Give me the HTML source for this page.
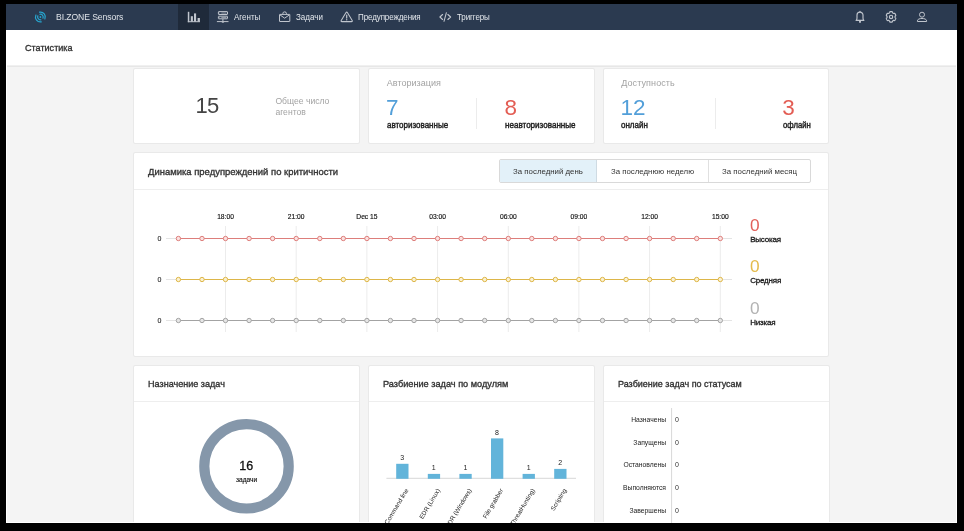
<!DOCTYPE html>
<html lang="ru">
<head>
<meta charset="utf-8">
<title>BI.ZONE Sensors</title>
<style>
*{box-sizing:border-box;margin:0;padding:0}
html,body{width:964px;height:531px;overflow:hidden;background:#000}
body{font-family:"Liberation Sans",sans-serif;color:#222;position:relative}
.app{will-change:transform;position:absolute;left:6px;top:4px;width:951px;height:519px;background:#f4f4f4;overflow:hidden;border:1px solid #fff;border-top:0}
.abs{position:absolute;white-space:nowrap}
.hdr{position:absolute;left:-1px;top:0;width:951px;height:26px;background:#2b3a50}
.hdr .act{position:absolute;left:172px;top:0;width:31px;height:26px;background:#1f2a3a}
.nav{position:absolute;top:0.4px;height:26px;line-height:26px;font-size:8.8px;color:#e3e7ec;white-space:nowrap;transform:scaleX(0.909);transform-origin:0 50%}
.sub{position:absolute;left:-1px;top:26px;width:951px;height:35px;background:#fff;box-shadow:0 1px 0 #f0f0f0,0 2px 0 #e7e7e7}
.sub span{position:absolute;left:19px;top:0;line-height:36px;font-size:9.05px;font-weight:normal;-webkit-text-stroke:0.32px #333;color:#333;transform-origin:0 50%}
.card{position:absolute;background:#fff;border:1px solid #fff;box-shadow:0 0 0 1px #e9e9e9;border-radius:1px}
.ct{position:absolute;left:12.6px;top:0;height:36px;line-height:36px;font-size:9.7px;font-weight:normal;-webkit-text-stroke:0.35px #333;color:#333;white-space:nowrap;transform-origin:0 50%}
.cl{position:absolute;left:-1px;right:-1px;top:35px;height:1px;background:#eeeeee}
.g{color:#a3a3a3}
.big{font-size:22.5px;line-height:22px}
.lab{font-size:8.4px;font-weight:normal;-webkit-text-stroke:0.4px #1c1c1c;color:#1c1c1c;transform-origin:0 50%}
svg{position:absolute;left:0;top:0;overflow:visible}
svg text{font-family:"Liberation Sans",sans-serif}
</style>
</head>
<body>
<div class="app">
  <div class="hdr">
    <div class="act"></div>
    <div class="nav" style="left:49.9px;font-size:9.4px;letter-spacing:-0.1px;transform:scaleX(0.921);color:#dfe3e8">BI.ZONE Sensors</div>
    <div class="nav" style="left:227.8px">Агенты</div>
    <div class="nav" style="left:290px">Задачи</div>
    <div class="nav" style="left:351.7px;letter-spacing:-0.11px">Предупреждения</div>
    <div class="nav" style="left:451px;letter-spacing:-0.13px">Триггеры</div>
  </div>
  <div class="sub"><span>Статистика</span></div>

  <!-- row 1 -->
  <div class="card" style="left:127px;top:65px;width:224.5px;height:73.6px">
    <div class="abs" style="left:60.4px;top:24px;font-size:22px;letter-spacing:-0.7px;line-height:24px;color:#444">15</div>
    <div class="abs g" style="left:140.4px;top:26px;font-size:8.6px;line-height:11px;white-space:normal;width:70px">Общее число агентов</div>
  </div>
  <div class="card" style="left:362px;top:65px;width:224.5px;height:73.6px">
    <div class="abs g" style="left:16.8px;top:6.8px;font-size:9px;line-height:12px;letter-spacing:0.03px">Авторизация</div>
    <div class="abs big" style="left:16px;top:27px;color:#529fd9">7</div>
    <div class="abs lab" style="left:16.8px;top:49.6px;transform:scaleX(0.955)">авторизованные</div>
    <div class="abs" style="left:106px;top:28px;width:1px;height:31px;background:#ececec"></div>
    <div class="abs big" style="left:134.6px;top:27px;color:#e35d54">8</div>
    <div class="abs lab" style="left:135.4px;top:49.6px;transform:scaleX(0.963)">неавторизованные</div>
  </div>
  <div class="card" style="left:597px;top:65px;width:224.4px;height:73.6px">
    <div class="abs g" style="left:16.2px;top:6.8px;font-size:9px;line-height:12px;letter-spacing:0.1px">Доступность</div>
    <div class="abs big" style="left:15.4px;top:27px;color:#529fd9">12</div>
    <div class="abs lab" style="left:16.2px;top:49.6px;transform:scaleX(0.954)">онлайн</div>
    <div class="abs" style="left:110px;top:28px;width:1px;height:31px;background:#ececec"></div>
    <div class="abs big" style="left:177.2px;top:27px;color:#e35d54">3</div>
    <div class="abs lab" style="left:178px;top:49.6px;transform:scaleX(0.92)">офлайн</div>
  </div>

  <!-- chart card -->
  <div class="card" style="left:127px;top:149px;width:694.4px;height:202.8px">
    <div class="ct" style="transform:scaleX(0.977)">Динамика предупреждений по критичности</div>
    <div class="cl"></div>
    <div id="bg" style="position:absolute;left:364px;top:5px;height:24px;display:flex;font-size:7.85px;line-height:23.4px;color:#333;border:1px solid #d9d9d9;border-radius:2px;overflow:hidden">
      <div style="width:97px;text-align:center;background:#e3f1f9;border-right:1px solid #cfdbe3">За последний день</div>
      <div style="width:112px;text-align:center;border-right:1px solid #e0e0e0">За последнюю неделю</div>
      <div style="width:101px;text-align:center">За последний месяц</div>
    </div>
  </div>

  <!-- bottom cards -->
  <div class="card" style="left:127px;top:362px;width:224.5px;height:170px">
    <div class="ct" style="transform:scaleX(0.9355);line-height:34px">Назначение задач</div><div class="cl" style="top:34px"></div>
  </div>
  <div class="card" style="left:362px;top:362px;width:224.5px;height:170px">
    <div class="ct" style="transform:scaleX(0.947);line-height:34px">Разбиение задач по модулям</div><div class="cl" style="top:34px"></div>
  </div>
  <div class="card" style="left:597px;top:362px;width:224.5px;height:170px">
    <div class="ct" style="transform:scaleX(0.929);line-height:34px">Разбиение задач по статусам</div><div class="cl" style="top:34px"></div>
  </div>
</div>
<div style="position:absolute;left:6px;top:4px;width:1px;height:26px;background:#2b3a50"></div><div style="position:absolute;left:956px;top:4px;width:1px;height:26px;background:#2b3a50"></div>
<!--SVG-->
<svg width="964" height="531" viewBox="0 0 964 531" style="clip-path:inset(4px 8px 8px 7px)">
<g fill="none" stroke="#27a5cf" stroke-width="1.2" stroke-linecap="round" transform="translate(40.4 17) rotate(52)"><circle r="0.95" fill="#27a5cf" stroke="none"/><path d="M-2.47 -1.31A2.8 2.8 0 0 1 2.47 -1.31"/><path d="M-2.47 1.31A2.8 2.8 0 0 0 2.47 1.31"/><path d="M-4.33 -2.30A4.9 4.9 0 0 1 4.33 -2.30"/><path d="M-4.33 2.30A4.9 4.9 0 0 0 4.33 2.30"/></g>
<g fill="#c0c5cd"><rect x="187.8" y="11.8" width="1.5" height="10.4"/><rect x="187.8" y="21.2" width="12.2" height="1"/><rect x="190.8" y="16.2" width="2.1" height="5.5"/><rect x="194" y="13.4" width="2.1" height="8.3"/><rect x="197.6" y="18" width="2.3" height="3.7"/></g>
<g fill="none" stroke="#c0c5cd" stroke-width="1"><rect x="218.4" y="11.6" width="9.1" height="2.9" rx="0.4"/><rect x="218.4" y="16.2" width="9.1" height="2.6" rx="0.4"/><path d="M216.9 21.6H228.5M222.9 19V21.5"/><path d="M221.3 13.05H226.5M221.3 17.5H226.5" stroke-width="0.9" opacity="0.75"/><path d="M219.6 13.05h.5M219.6 17.5h.5" stroke-width="0.9"/></g><ellipse cx="222.9" cy="22.1" rx="1.3" ry="0.7" fill="#c0c5cd"/>
<g fill="none" stroke="#c0c5cd" stroke-width="1" stroke-linejoin="round"><rect x="279.5" y="14.4" width="10.3" height="7.1" rx="0.2"/><path d="M282.8 14.4V13.7A1.85 1.85 0 0 1 286.5 13.7V14.4"/><path d="M280 14.9L284.65 18.2L289.3 14.9"/></g>
<g fill="none" stroke="#c0c5cd" stroke-width="1.05" stroke-linejoin="round" stroke-linecap="round"><path d="M345.9 12.7Q346.7 11.5 347.5 12.7L352.2 20.5Q352.8 21.6 351.5 21.6H341.9Q340.6 21.6 341.2 20.5Z"/><path d="M346.7 15.1V18.1" stroke-width="1.2"/></g><circle cx="346.7" cy="19.7" r="0.7" fill="#c0c5cd"/>
<g fill="none" stroke="#c0c5cd" stroke-width="1.15" stroke-linecap="round" stroke-linejoin="round"><path d="M442.6 14.5L439.9 17L442.6 19.5"/><path d="M447.9 14.5L450.6 17L447.9 19.5"/><path d="M446.4 12.7L444 21.3" stroke-width="1.05"/></g>
<g fill="none" stroke="#c0c5cd" stroke-width="1.15" stroke-linecap="round" stroke-linejoin="round"><path d="M856.1 20.4C856.8 19.8 857 19.1 857 18V15.1A3 3 0 0 1 863 15.1V18C863 19.1 863.2 19.8 863.9 20.4Z"/><path d="M860 11.9V11.3"/><path d="M860 21V22.7" stroke-width="1.9" stroke-linecap="butt"/></g>
<g fill="none" stroke="#c0c5cd" stroke-width="1.2" stroke-linejoin="round"><path d="M891.05 11.60L891.37 11.61L891.70 11.64L892.01 11.71L892.30 11.88L892.45 12.48L892.61 12.86L892.84 13.02L893.07 13.16L893.29 13.30L893.53 13.43L893.92 13.39L894.48 13.23L894.76 13.41L894.97 13.67L895.16 13.95L895.33 14.25L895.49 14.55L895.62 14.87L895.73 15.20L895.73 15.56L895.32 15.99L895.09 16.33L895.08 16.62L895.08 16.90L895.08 17.18L895.09 17.47L895.32 17.81L895.73 18.24L895.73 18.60L895.62 18.93L895.49 19.25L895.33 19.55L895.16 19.85L894.97 20.13L894.76 20.39L894.48 20.57L893.92 20.41L893.53 20.37L893.29 20.50L893.07 20.64L892.84 20.78L892.61 20.94L892.45 21.32L892.30 21.92L892.01 22.09L891.70 22.16L891.37 22.19L891.05 22.20L890.73 22.19L890.40 22.16L890.09 22.09L889.80 21.92L889.65 21.32L889.49 20.94L889.26 20.78L889.03 20.64L888.81 20.50L888.57 20.37L888.18 20.41L887.62 20.57L887.34 20.39L887.13 20.13L886.94 19.85L886.77 19.55L886.61 19.25L886.48 18.93L886.37 18.60L886.37 18.24L886.78 17.81L887.01 17.47L887.02 17.18L887.02 16.90L887.02 16.62L887.01 16.33L886.78 15.99L886.37 15.56L886.37 15.20L886.48 14.87L886.61 14.55L886.77 14.25L886.94 13.95L887.13 13.67L887.34 13.41L887.62 13.23L888.18 13.39L888.57 13.43L888.81 13.30L889.03 13.16L889.26 13.02L889.49 12.86L889.65 12.48L889.80 11.88L890.09 11.71L890.40 11.64L890.73 11.61L891.05 11.60Z"/><circle cx="891.05" cy="16.9" r="1.65"/></g>
<g fill="none" stroke="#c0c5cd" stroke-width="1" stroke-linejoin="round"><circle cx="922" cy="14.7" r="2.5"/><path d="M917.4 21.5V20.8C917.4 17.7 926.6 17.7 926.6 20.8V21.5Z"/></g>
<g shape-rendering="auto">
<path d="M225.5 226V332" stroke="#ececec" stroke-width="1"/>
<path d="M296.2 226V332" stroke="#ececec" stroke-width="1"/>
<path d="M366.9 226V332" stroke="#ececec" stroke-width="1"/>
<path d="M437.6 226V332" stroke="#ececec" stroke-width="1"/>
<path d="M508.3 226V332" stroke="#ececec" stroke-width="1"/>
<path d="M578.9 226V332" stroke="#ececec" stroke-width="1"/>
<path d="M649.6 226V332" stroke="#ececec" stroke-width="1"/>
<path d="M720.3 226V332" stroke="#ececec" stroke-width="1"/>
<g font-size="6.7" fill="#111" stroke="#111" stroke-width="0.15" text-anchor="middle">
<text x="225.5" y="219">18:00</text>
<text x="296.2" y="219">21:00</text>
<text x="366.9" y="219">Dec 15</text>
<text x="437.6" y="219">03:00</text>
<text x="508.3" y="219">06:00</text>
<text x="578.9" y="219">09:00</text>
<text x="649.6" y="219">12:00</text>
<text x="720.3" y="219">15:00</text>
</g>
<path d="M166 238.5H732" stroke="#e4e4e4" stroke-width="1"/>
<text x="161.3" y="241.0" font-size="7" fill="#222" stroke="#222" stroke-width="0.1" text-anchor="end">0</text>
<path d="M178.4 238.5H720.3" stroke="#dd7e7b" stroke-width="1.05"/>
<g fill="#fbe1e0" stroke="#dd7e7b" stroke-width="1">
<circle cx="178.4" cy="238.5" r="2.2"/>
<circle cx="202.0" cy="238.5" r="2.2"/>
<circle cx="225.5" cy="238.5" r="2.2"/>
<circle cx="249.1" cy="238.5" r="2.2"/>
<circle cx="272.6" cy="238.5" r="2.2"/>
<circle cx="296.2" cy="238.5" r="2.2"/>
<circle cx="319.8" cy="238.5" r="2.2"/>
<circle cx="343.3" cy="238.5" r="2.2"/>
<circle cx="366.9" cy="238.5" r="2.2"/>
<circle cx="390.4" cy="238.5" r="2.2"/>
<circle cx="414.0" cy="238.5" r="2.2"/>
<circle cx="437.6" cy="238.5" r="2.2"/>
<circle cx="461.1" cy="238.5" r="2.2"/>
<circle cx="484.7" cy="238.5" r="2.2"/>
<circle cx="508.3" cy="238.5" r="2.2"/>
<circle cx="531.8" cy="238.5" r="2.2"/>
<circle cx="555.4" cy="238.5" r="2.2"/>
<circle cx="578.9" cy="238.5" r="2.2"/>
<circle cx="602.5" cy="238.5" r="2.2"/>
<circle cx="626.1" cy="238.5" r="2.2"/>
<circle cx="649.6" cy="238.5" r="2.2"/>
<circle cx="673.2" cy="238.5" r="2.2"/>
<circle cx="696.7" cy="238.5" r="2.2"/>
<circle cx="720.3" cy="238.5" r="2.2"/>
</g>
<path d="M166 279.5H732" stroke="#e4e4e4" stroke-width="1"/>
<text x="161.3" y="282.0" font-size="7" fill="#222" stroke="#222" stroke-width="0.1" text-anchor="end">0</text>
<path d="M178.4 279.5H720.3" stroke="#ddb649" stroke-width="1.05"/>
<g fill="#fcf1cf" stroke="#ddb649" stroke-width="1">
<circle cx="178.4" cy="279.5" r="2.2"/>
<circle cx="202.0" cy="279.5" r="2.2"/>
<circle cx="225.5" cy="279.5" r="2.2"/>
<circle cx="249.1" cy="279.5" r="2.2"/>
<circle cx="272.6" cy="279.5" r="2.2"/>
<circle cx="296.2" cy="279.5" r="2.2"/>
<circle cx="319.8" cy="279.5" r="2.2"/>
<circle cx="343.3" cy="279.5" r="2.2"/>
<circle cx="366.9" cy="279.5" r="2.2"/>
<circle cx="390.4" cy="279.5" r="2.2"/>
<circle cx="414.0" cy="279.5" r="2.2"/>
<circle cx="437.6" cy="279.5" r="2.2"/>
<circle cx="461.1" cy="279.5" r="2.2"/>
<circle cx="484.7" cy="279.5" r="2.2"/>
<circle cx="508.3" cy="279.5" r="2.2"/>
<circle cx="531.8" cy="279.5" r="2.2"/>
<circle cx="555.4" cy="279.5" r="2.2"/>
<circle cx="578.9" cy="279.5" r="2.2"/>
<circle cx="602.5" cy="279.5" r="2.2"/>
<circle cx="626.1" cy="279.5" r="2.2"/>
<circle cx="649.6" cy="279.5" r="2.2"/>
<circle cx="673.2" cy="279.5" r="2.2"/>
<circle cx="696.7" cy="279.5" r="2.2"/>
<circle cx="720.3" cy="279.5" r="2.2"/>
</g>
<path d="M166 320.5H732" stroke="#e4e4e4" stroke-width="1"/>
<text x="161.3" y="323.0" font-size="7" fill="#222" stroke="#222" stroke-width="0.1" text-anchor="end">0</text>
<path d="M178.4 320.5H720.3" stroke="#a3a3a3" stroke-width="1.05"/>
<g fill="#e6e6e6" stroke="#a3a3a3" stroke-width="1">
<circle cx="178.4" cy="320.5" r="2.2"/>
<circle cx="202.0" cy="320.5" r="2.2"/>
<circle cx="225.5" cy="320.5" r="2.2"/>
<circle cx="249.1" cy="320.5" r="2.2"/>
<circle cx="272.6" cy="320.5" r="2.2"/>
<circle cx="296.2" cy="320.5" r="2.2"/>
<circle cx="319.8" cy="320.5" r="2.2"/>
<circle cx="343.3" cy="320.5" r="2.2"/>
<circle cx="366.9" cy="320.5" r="2.2"/>
<circle cx="390.4" cy="320.5" r="2.2"/>
<circle cx="414.0" cy="320.5" r="2.2"/>
<circle cx="437.6" cy="320.5" r="2.2"/>
<circle cx="461.1" cy="320.5" r="2.2"/>
<circle cx="484.7" cy="320.5" r="2.2"/>
<circle cx="508.3" cy="320.5" r="2.2"/>
<circle cx="531.8" cy="320.5" r="2.2"/>
<circle cx="555.4" cy="320.5" r="2.2"/>
<circle cx="578.9" cy="320.5" r="2.2"/>
<circle cx="602.5" cy="320.5" r="2.2"/>
<circle cx="626.1" cy="320.5" r="2.2"/>
<circle cx="649.6" cy="320.5" r="2.2"/>
<circle cx="673.2" cy="320.5" r="2.2"/>
<circle cx="696.7" cy="320.5" r="2.2"/>
<circle cx="720.3" cy="320.5" r="2.2"/>
</g>
</g>
<text x="750" y="230.8" font-size="17.3" fill="#e2605a">0</text>
<text x="750.2" y="242" font-size="8" letter-spacing="-0.2" fill="#1a1a1a" stroke="#1a1a1a" stroke-width="0.3">Высокая</text>
<text x="750" y="272.4" font-size="17.3" fill="#e4bb4c">0</text>
<text x="750.2" y="283.3" font-size="8" letter-spacing="-0.2" fill="#1a1a1a" stroke="#1a1a1a" stroke-width="0.3">Средняя</text>
<text x="750" y="313.8" font-size="17.3" fill="#b3b3b3">0</text>
<text x="750.2" y="324.7" font-size="8" letter-spacing="-0.2" fill="#1a1a1a" stroke="#1a1a1a" stroke-width="0.3">Низкая</text>
<circle cx="246.5" cy="466.3" r="42.2" fill="none" stroke="#8597aa" stroke-width="10.2"/>
<text x="246.3" y="470.3" font-size="12.5" fill="#111" stroke="#111" stroke-width="0.3" text-anchor="middle">16</text>
<text x="246.6" y="481.8" font-size="6.6" fill="#111" stroke="#111" stroke-width="0.15" text-anchor="middle">задачи</text>
<path d="M386.4 478.3H576.0" stroke="#d8d8d8" stroke-width="1"/>
<rect x="396.2" y="463.8" width="12.3" height="15.0" fill="#62b4da"/>
<text x="402.2" y="459.9" font-size="7" fill="#1a1a1a" text-anchor="middle">3</text>
<text transform="translate(408.7 490.2) rotate(-59)" font-size="6.3" fill="#222" text-anchor="end">Command line</text>
<rect x="427.8" y="473.9" width="12.3" height="4.9" fill="#62b4da"/>
<text x="433.8" y="470.0" font-size="7" fill="#1a1a1a" text-anchor="middle">1</text>
<text transform="translate(440.3 490.2) rotate(-59)" font-size="6.3" fill="#222" text-anchor="end">EDR (Linux)</text>
<rect x="459.4" y="473.9" width="12.3" height="4.9" fill="#62b4da"/>
<text x="465.4" y="470.0" font-size="7" fill="#1a1a1a" text-anchor="middle">1</text>
<text transform="translate(471.9 490.2) rotate(-59)" font-size="6.3" fill="#222" text-anchor="end">EDR (Windows)</text>
<rect x="491.0" y="438.4" width="12.3" height="40.4" fill="#62b4da"/>
<text x="497.0" y="434.5" font-size="7" fill="#1a1a1a" text-anchor="middle">8</text>
<text transform="translate(503.5 490.2) rotate(-59)" font-size="6.3" fill="#222" text-anchor="end">File grabber</text>
<rect x="522.6" y="473.9" width="12.3" height="4.9" fill="#62b4da"/>
<text x="528.6" y="470.0" font-size="7" fill="#1a1a1a" text-anchor="middle">1</text>
<text transform="translate(535.1 490.2) rotate(-59)" font-size="6.3" fill="#222" text-anchor="end">EDR (ThreatHunting)</text>
<rect x="554.2" y="468.9" width="12.3" height="9.9" fill="#62b4da"/>
<text x="560.2" y="465.0" font-size="7" fill="#1a1a1a" text-anchor="middle">2</text>
<text transform="translate(566.7 490.2) rotate(-59)" font-size="6.3" fill="#222" text-anchor="end">Scripting</text>
<path d="M671.6 408V531" stroke="#d8d8d8" stroke-width="1"/>
<text x="666" y="421.8" font-size="6.75" fill="#222" text-anchor="end">Назначены</text>
<text x="675" y="421.8" font-size="7" fill="#333">0</text>
<text x="666" y="444.6" font-size="6.75" fill="#222" text-anchor="end">Запущены</text>
<text x="675" y="444.6" font-size="7" fill="#333">0</text>
<text x="666" y="467.4" font-size="6.75" fill="#222" text-anchor="end">Остановлены</text>
<text x="675" y="467.4" font-size="7" fill="#333">0</text>
<text x="666" y="490.2" font-size="6.75" fill="#222" text-anchor="end">Выполняются</text>
<text x="675" y="490.2" font-size="7" fill="#333">0</text>
<text x="666" y="513.0" font-size="6.75" fill="#222" text-anchor="end">Завершены</text>
<text x="675" y="513.0" font-size="7" fill="#333">0</text>
</svg>
<!--/SVG-->
</body>
</html>
